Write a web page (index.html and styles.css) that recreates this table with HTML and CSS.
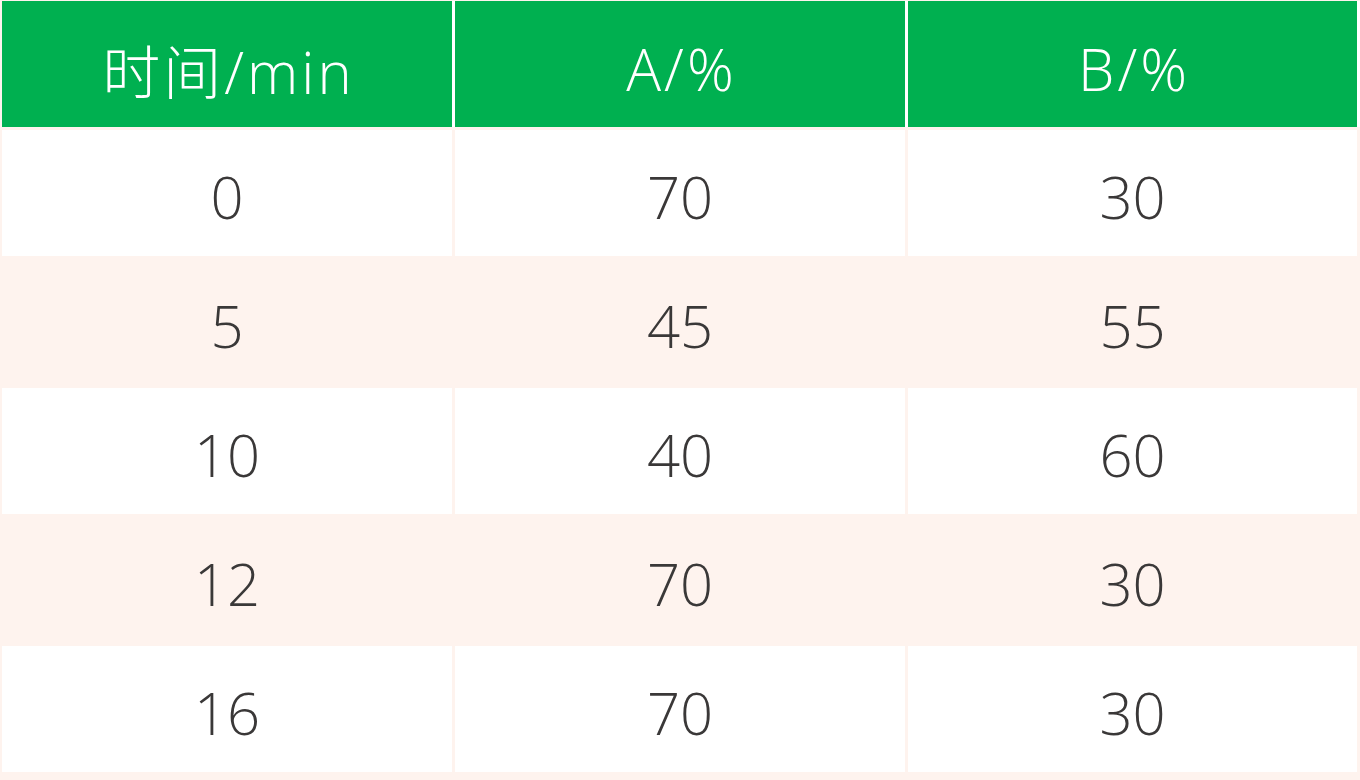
FILE: index.html
```html
<!DOCTYPE html>
<html lang="zh">
<head>
<meta charset="utf-8">
<title>表格</title>
<link rel="stylesheet" href="styles.css">
</head>
<body>
<div class="table">
  <div class="row head">
    <div class="cell">时间/min</div>
    <div class="cell">A/%</div>
    <div class="cell">B/%</div>
  </div>
  <div class="row">
    <div class="cell">0</div>
    <div class="cell">70</div>
    <div class="cell">30</div>
  </div>
  <div class="row alt">
    <div class="cell">5</div>
    <div class="cell">45</div>
    <div class="cell">55</div>
  </div>
  <div class="row">
    <div class="cell">10</div>
    <div class="cell">40</div>
    <div class="cell">60</div>
  </div>
  <div class="row alt">
    <div class="cell">12</div>
    <div class="cell">70</div>
    <div class="cell">30</div>
  </div>
  <div class="row">
    <div class="cell">16</div>
    <div class="cell">70</div>
    <div class="cell">30</div>
  </div>
</div>
</body>
</html>
```
FILE: styles.css
```css
html, body {
  margin: 0;
  padding: 0;
}
body {
  background: #fef3ee;
  width: 1360px;
  height: 780px;
  overflow: hidden;
  font-family: "Open Sans", "Noto Sans CJK SC", sans-serif;
}
.table {
  display: flex;
  flex-direction: column;
  gap: 3px;
  padding: 1px 0 0 2px;
}
.row {
  display: grid;
  grid-template-columns: 450px 450px 449px;
  column-gap: 3px;
  height: 126px;
}
.cell {
  display: flex;
  align-items: center;
  justify-content: center;
  background: #ffffff;
  color: #3a3838;
  font-size: 58px;
  font-weight: 300;
  padding-top: 6px;
  box-sizing: border-box;
}
.head {
  background: #ffffff;
}
.head .cell {
  background: #00b050;
  color: #ffffff;
  font-size: 58px;
  letter-spacing: 3px;
  padding-top: 9px;
  padding-left: 3px;
}
.alt .cell {
  background: #fef3ee;
}
```
